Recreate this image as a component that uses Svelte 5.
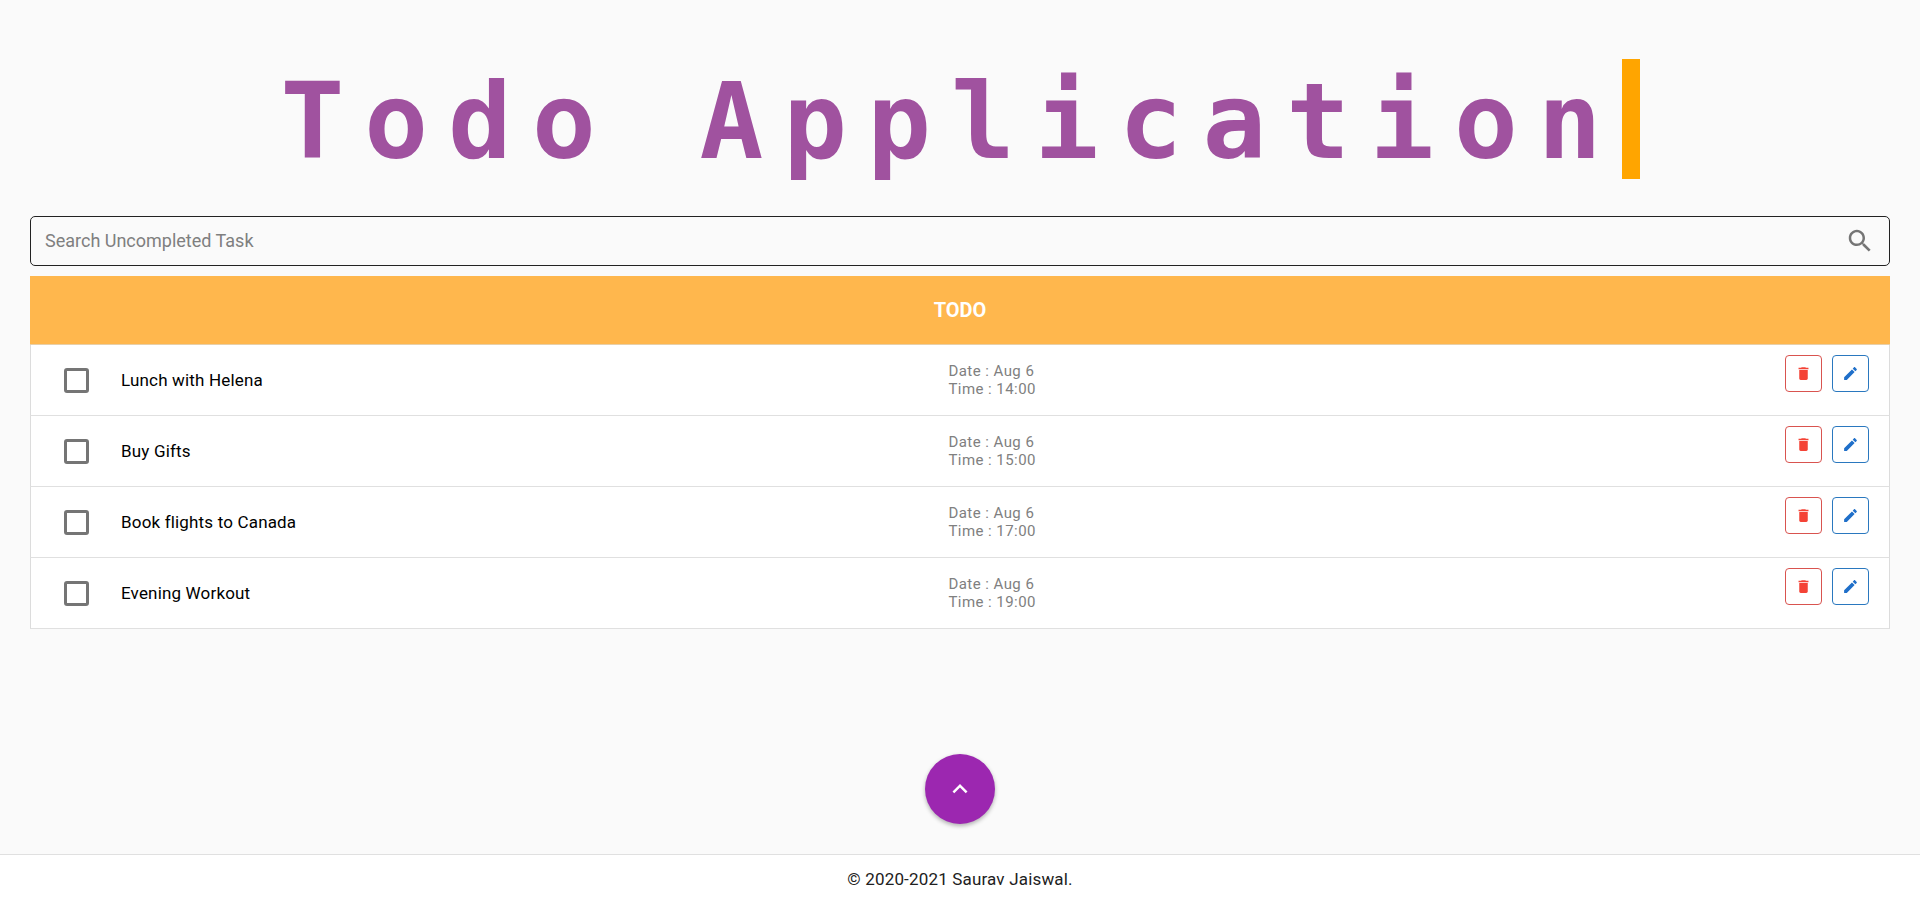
<script>
  let query = $state('');
  let tasks = $state([
    { id: 1, title: 'Lunch with Helena', date: 'Aug 6', time: '14:00', done: false },
    { id: 2, title: 'Buy Gifts', date: 'Aug 6', time: '15:00', done: false },
    { id: 3, title: 'Book flights to Canada', date: 'Aug 6', time: '17:00', done: false },
    { id: 4, title: 'Evening Workout', date: 'Aug 6', time: '19:00', done: false }
  ]);
  let visible = $derived(
    tasks.filter((t) => t.title.toLowerCase().includes(query.trim().toLowerCase()))
  );

  function remove(id) {
    tasks = tasks.filter((t) => t.id !== id);
  }
</script>

<div class="page">
  <main>
    <h1><span class="typed">Todo Application</span></h1>

    <label class="search">
      <input type="text" placeholder="Search Uncompleted Task" aria-label="Search Uncompleted Task" bind:value={query} />
      <svg viewBox="0 0 24 24" aria-hidden="true">
        <path d="M15.5 14h-.79l-.28-.27C15.41 12.59 16 11.11 16 9.5 16 5.91 13.09 3 9.5 3S3 5.91 3 9.5 5.91 16 9.5 16c1.61 0 3.09-.59 4.23-1.57l.27.28v.79l5 4.99L20.49 19l-4.99-5zm-6 0C7.01 14 5 11.99 5 9.5S7.01 5 9.5 5 14 7.01 14 9.5 11.99 14 9.5 14z" />
      </svg>
    </label>

    <table>
      <colgroup>
        <col class="col-check" />
        <col />
        <col class="col-when" />
        <col class="col-actions" />
      </colgroup>
      <thead>
        <tr><th colspan="4">TODO</th></tr>
      </thead>
      <tbody>
        {#each visible as task (task.id)}
          <tr>
            <td class="check">
              <input type="checkbox" id="task-{task.id}" bind:checked={task.done} />
            </td>
            <td class="name"><label for="task-{task.id}">{task.title}</label></td>
            <td class="when">
              <div>Date : {task.date}</div>
              <div>Time : {task.time}</div>
            </td>
            <td class="actions">
              <div class="buttons">
                <button class="delete" type="button" aria-label="Delete" onclick={() => remove(task.id)}>
                  <svg viewBox="0 0 24 24" aria-hidden="true">
                    <path d="M6 19c0 1.1.9 2 2 2h8c1.1 0 2-.9 2-2V7H6v12zM19 4h-3.500l-1-1h-5l-1 1H5v2h14V4z" />
                  </svg>
                </button>
                <button class="edit" type="button" aria-label="Edit">
                  <svg viewBox="0 0 24 24" aria-hidden="true">
                    <path d="M3 17.250V21h3.750L17.810 9.940l-3.750-3.750L3 17.250zM20.710 7.040c.39-.39.39-1.020 0-1.410l-2.340-2.340c-.39-.39-1.020-.39-1.410 0l-1.830 1.830 3.750 3.750 1.830-1.830z" />
                  </svg>
                </button>
              </div>
            </td>
          </tr>
        {/each}
      </tbody>
    </table>
  </main>

  <button class="fab" type="button" aria-label="Open">
    <svg viewBox="0 0 24 24" aria-hidden="true">
      <path d="M7.410 15.410L12 10.830l4.590 4.580L18 14l-6-6-6 6z" />
    </svg>
  </button>

  <footer>© 2020-2021 Saurav Jaiswal.</footer>
</div>

<style>
  :global(body) {
    margin: 0;
    background: #fafafa;
    font-family: Roboto, sans-serif;
    font-size: 18px;
    color: #212121;
  }

  .page {
    min-height: 100vh;
    display: flex;
    flex-direction: column;
  }

  main {
    padding: 59px 30px 0;
  }

  h1 {
    margin: 0 0 37px;
    text-align: center;
    font-size: 0;
  }

  .typed {
    display: inline-block;
    padding-top: 6px;
    border-right: 18px solid #ffa500;
    font-family: 'DejaVu Sans Mono', monospace;
    font-size: 106px;
    line-height: 114px;
    letter-spacing: 20px;
    font-weight: 700;
    color: #a0529f;
    white-space: nowrap;
  }

  .search {
    display: flex;
    align-items: center;
    height: 48px;
    margin-bottom: 10px;
    padding: 0 14px;
    border: 1px solid #222;
    border-radius: 5px;
  }

  .search input {
    flex: 1;
    min-width: 0;
    padding: 0;
    border: 0;
    outline: 0;
    background: none;
    font: inherit;
    line-height: 24px;
    color: inherit;
  }

  .search input::placeholder {
    color: #7f7f7f;
    opacity: 1;
  }

  .search svg {
    width: 30px;
    height: 30px;
    fill: #757575;
  }

  table {
    width: 100%;
    table-layout: fixed;
    border-collapse: separate;
    border-spacing: 0;
    background: #fff;
  }

  .col-check {
    width: 91px;
  }

  .col-when {
    width: 31%;
  }

  .col-actions {
    width: 20%;
  }

  th {
    height: 68px;
    padding: 0;
    border-bottom: 1px solid #e8cfa8;
    background: #ffb74d;
    background-clip: padding-box;
    color: #fff;
    font-size: 20px;
    font-weight: 700;
  }

  td {
    box-sizing: border-box;
    height: 71px;
    padding: 0;
    border-bottom: 1px solid #e0e0e0;
    vertical-align: middle;
  }

  td:first-child {
    border-left: 1px solid #dcdcdc;
  }

  td:last-child {
    border-right: 1px solid #dcdcdc;
  }

  .check input {
    display: block;
    appearance: none;
    box-sizing: border-box;
    width: 25px;
    height: 25px;
    margin: 0 0 0 33px;
    border: 3px solid #757575;
    border-radius: 3px;
  }

  .check input:checked {
    background: #757575;
  }

  .name {
    color: #000;
    font-size: 17px;
    letter-spacing: 0.01em;
  }

  .when {
    padding-left: 7px;
    font-size: 15px;
    line-height: 18px;
    letter-spacing: 0.03em;
    color: #808080;
  }

  .actions {
    vertical-align: top;
  }

  .buttons {
    display: flex;
    justify-content: flex-end;
    gap: 10px;
    padding: 10px 20px 0 0;
  }

  .buttons button {
    display: flex;
    align-items: center;
    justify-content: center;
    box-sizing: border-box;
    width: 37px;
    height: 37px;
    padding: 0;
    border: 1px solid;
    border-radius: 4px;
    background: none;
  }

  .buttons svg {
    width: 17px;
    height: 17px;
    fill: currentColor;
  }

  .buttons .delete {
    color: #d9534f;
  }

  .buttons .delete svg {
    fill: #f44336;
  }

  .buttons .edit {
    color: #2a78bf;
  }

  .buttons .edit svg {
    fill: #1f6fc9;
  }

  .fab {
    display: flex;
    align-items: center;
    justify-content: center;
    align-self: center;
    width: 70px;
    height: 70px;
    margin: auto 0 30px;
    padding: 0;
    border: 0;
    border-radius: 50%;
    background: #9c27b0;
    box-shadow: 0 2px 4px rgba(0, 0, 0, 0.3);
  }

  .fab svg {
    width: 30px;
    height: 30px;
    fill: #fff;
  }

  footer {
    padding: 12px 0 10px;
    border-top: 1px solid #e0e0e0;
    background: #fff;
    font-size: 17px;
    line-height: 24px;
    letter-spacing: 0.01em;
    text-align: center;
  }
</style>
